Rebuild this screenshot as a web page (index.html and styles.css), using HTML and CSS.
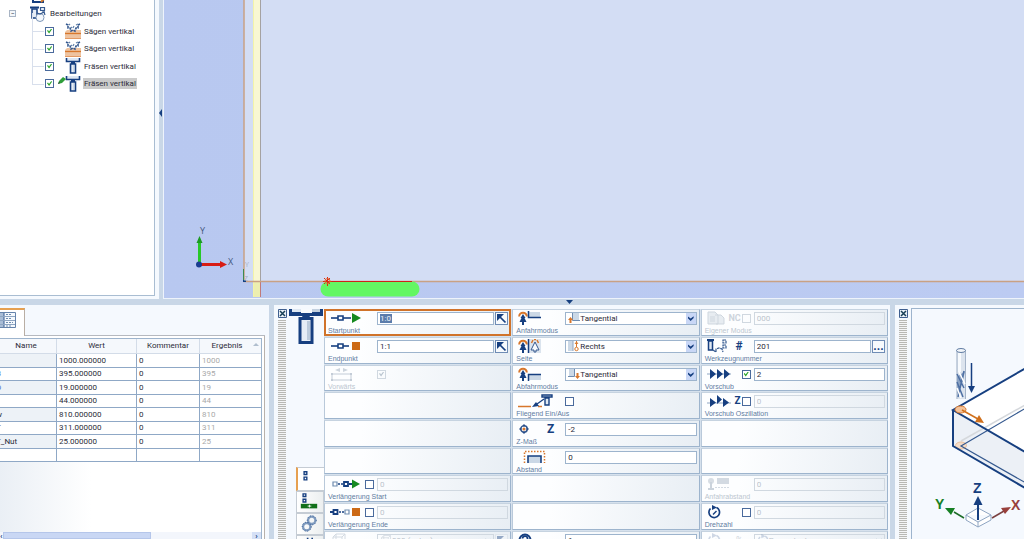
FILE: index.html
```html
<!DOCTYPE html>
<html lang="de">
<head>
<meta charset="utf-8">
<title>Bearbeitungen</title>
<link rel="stylesheet" href="styles.css">
</head>
<body>
<svg class="defs" width="0" height="0" aria-hidden="true">
  <defs>
    <symbol id="saw" viewBox="0 0 16 16">
      <path d="M0 9l2-2h14v9H0z" fill="#eec3a0"/><path d="M0 10.500h16" stroke="#d8772c" stroke-width="1.300"/><path d="M0 15.500h16" stroke="#e39a64"/>
      <path d="M1 1l2 1v3l2 0 1 3 2-1 2 1 1-3 2 0 0-3 2-1" fill="none" stroke="#35598f" stroke-width="1.600" stroke-dasharray="2.500 .8"/>
      <path d="M5 2L4 1M8 5l1-2M11 2l2-1M6 4l1 1" stroke="#6583ab" stroke-width="1.200"/>
    </symbol>
    <symbol id="mill" viewBox="0 0 16 16">
      <path d="M1.500 0v3.500h13V0" fill="#dce6f2" stroke="#163f80" stroke-width="1.600"/><path d="M6 4h4v2H6z" fill="#163f80"/>
      <path d="M5.500 6h5v9h-5z" fill="#e6edf6" stroke="#163f80" stroke-width="1.600"/><path d="M9 7v7" stroke="#b4c4d8"/>
    </symbol>
    <symbol id="tools" viewBox="0 0 16 16">
      <path d="M0 1.500h9" stroke="#163f80" stroke-width="2"/><path d="M2 3h5v9H2z" fill="#e6edf6" stroke="#163f80" stroke-width="1.500"/>
      <path d="M10.500 1.500h4v3h-4zM12 6h3" fill="#e6edf6" stroke="#35598f" stroke-width="1.200"/><circle cx="10" cy="11.500" r="4" fill="#f4f8fd" stroke="#7f97b8"/><path d="M7 7l3 1 4-2 1 3" stroke="#35598f" fill="none" stroke-width="1.200"/>
    </symbol>
    <symbol id="close" viewBox="0 0 9 9">
      <path d="M.5.5h8v8h-8z" fill="#eaf1f8" stroke="#3f5f8f"/><path d="M2 2l5 5M7 2L2 7" stroke="#173f57" stroke-width="1.500"/>
    </symbol>
    <symbol id="start" viewBox="0 0 32 12">
      <path d="M1 6h20" stroke="#163f80" stroke-width="1.600"/><path d="M8 4h5v4H8z" fill="#fff" stroke="#163f80" stroke-width="1.600"/><path d="M22 1l9 5-9 5z" fill="#168a20"/>
    </symbol>
    <symbol id="end" viewBox="0 0 32 12">
      <path d="M1 6h18" stroke="#163f80" stroke-width="1.600"/><path d="M8 4h5v4H8z" fill="#fff" stroke="#163f80" stroke-width="1.600"/><path d="M22 2h8v8h-8z" fill="#cc6a16"/>
    </symbol>
    <symbol id="extstart" viewBox="0 0 32 12">
      <path d="M3 4h4v4H3z" fill="#fff" stroke="#6f8cb0" stroke-width="1.200"/><path d="M8 6h6" stroke="#163f80" stroke-width="1.400" stroke-dasharray="2 1"/><path d="M14 4h4v4h-4zM19 6h4" fill="#fff" stroke="#163f80" stroke-width="1.800"/><path d="M22 1.500l8 4.500-8 4.500z" fill="#168a20"/>
    </symbol>
    <symbol id="extend" viewBox="0 0 32 12">
      <path d="M0 6h3M3.500 4h4v4h-4z" fill="#fff" stroke="#163f80" stroke-width="1.800"/><path d="M9 6h6" stroke="#163f80" stroke-width="1.400" stroke-dasharray="2 1"/><path d="M15 4h4v4h-4z" fill="#fff" stroke="#6f8cb0" stroke-width="1.200"/><path d="M22 2h8v8h-8z" fill="#cc6a16"/>
    </symbol>
    <symbol id="forward" viewBox="0 0 32 14">
      <path d="M5 3l5-2v4zM13 1l5 2-5 2z" fill="#ccd4dd"/><path d="M2 7h19v6H2z" fill="none" stroke="#c3ccd7"/><path d="M1 6h2v2H1zM20 6h2v2h-2zM1 12h2v2H1zM20 12h2v2h-2z" fill="#c3ccd7"/>
    </symbol>
    <symbol id="tree" viewBox="0 0 10 14">
      <path d="M1.200 5.500a3.800 3.800 0 1 1 7.600 0" fill="none" stroke="#d8772c" stroke-width="2"/><path d="M5 3l2.500 4H6.500l2 4H6v3H4v-3H1.500l2-4h-1z" fill="#163f80"/>
    </symbol>
    <symbol id="approach" viewBox="0 0 32 14">
      <use href="#tree" width="10" height="14"/><path d="M11 1v6h11V1z" fill="#cbd8e6"/><path d="M10.500 0v6.500H23" fill="none" stroke="#163f80" stroke-width="1.500"/>
    </symbol>
    <symbol id="side" viewBox="0 0 32 14">
      <use href="#tree" width="10" height="14"/><path d="M11 0h12v14H11z" fill="#dbe4ee"/><path d="M10.500 0v14" stroke="#163f80" stroke-width="1.500"/><path d="M17 3l4 8h-3v2h-2v-2h-3z" fill="#f7fafd" stroke="#35598f"/><path d="M13.500 4l1.500-3M20.500 4L19 1M16 .5h2" stroke="#d8772c" stroke-width="1.500" fill="none"/>
    </symbol>
    <symbol id="leave" viewBox="0 0 32 14">
      <use href="#tree" width="10" height="14"/><path d="M11 8h12v5H11z" fill="#cbd8e6"/><path d="M10.500 14V7.500H23" fill="none" stroke="#163f80" stroke-width="1.500"/>
    </symbol>
    <symbol id="flying" viewBox="0 0 36 14">
      <path d="M0 12.500h13M20 12.500h4" stroke="#d8772c" stroke-width="1.500"/><path d="M26 5l-7 5" stroke="#163f80" stroke-width="1.300"/><path d="M14 13l4-5 3 4z" fill="#163f80"/><path d="M24 1h10v2H24zM27 4h4v7h-4z" fill="#e0e9f3" stroke="#163f80" stroke-width="1.400"/>
    </symbol>
    <symbol id="target" viewBox="0 0 10 10">
      <circle cx="5" cy="5" r="2.700" fill="#fff" stroke="#35598f" stroke-width="1.300"/><path d="M5 1v2M5 7v2M1 5h2M7 5h2" stroke="#163f80"/><circle cx="5" cy="5" r="1.300" fill="#d8772c"/>
    </symbol>
    <symbol id="distance" viewBox="0 0 32 14">
      <path d="M6.500 13V1.500h20V13" fill="none" stroke="#d8772c" stroke-width="1.500" stroke-dasharray="1.500 1.500"/><path d="M10 13V6h13v7" fill="#cbd8e6" stroke="#163f80" stroke-width="1.600"/>
    </symbol>
    <symbol id="toolnum" viewBox="0 0 20 14">
      <path d="M0 1h7" stroke="#163f80" stroke-width="2"/><path d="M1.500 2h4v9h-4z" fill="#e0e9f3" stroke="#163f80" stroke-width="1.500"/><path d="M6 11l3 2 0-3 3-1 3 1 1 3M16 1h3v3h-3zM16 6h3v3h-3z" fill="none" stroke="#35598f" stroke-width="1.200" stroke-dasharray="3 .7"/>
    </symbol>
    <symbol id="feed" viewBox="0 0 24 12">
      <path d="M0 6h24" stroke="#8ea5c2"/><path d="M3 1l6 5-6 5zM10 1l6 5-6 5zM17 1l6 5-6 5z" fill="#163f80"/>
    </symbol>
    <symbol id="feedz" viewBox="0 0 24 12">
      <path d="M0 8h24" stroke="#8ea5c2"/><path d="M3 3l6 4.500-6 4.500zM10 0l5 4.500-5 4.500zM16 3l6 4.500-6 4.500z" fill="#163f80"/>
    </symbol>
    <symbol id="speed" viewBox="0 0 14 14">
      <path d="M3.500 3.500a5.300 5.300 0 1 0 6-1" fill="none" stroke="#163f80" stroke-width="1.700"/><path d="M5 0l5 2.500-5 2.500z" fill="#163f80"/><path d="M9.500 6L6 9.500" stroke="#163f80" stroke-width="1.500"/>
    </symbol>
    <symbol id="page" viewBox="0 0 18 14">
      <path d="M1 1h7l3 3v9H1zM8 4h6l3 3v6H9" fill="#e7ecf1" stroke="#cfd7df"/><path d="M3 6h5M3 8h5M3 10h5" stroke="#cfd7df"/>
    </symbol>
    <symbol id="gap" viewBox="0 0 24 14">
      <circle cx="4" cy="4" r="3" fill="#d7dde4"/><path d="M4 5v7M1 12h6" stroke="#cbd3dc" stroke-width="2"/><path d="M10 1h12v6H10z" fill="#d3dae2"/><path d="M8 10.500h15" stroke="#d3dae2" stroke-dasharray="2 1"/>
    </symbol>
    <symbol id="cube" viewBox="0 0 16 14">
      <path d="M2 4h9v10H2zM2 4l3-3h9v10l-3 3M11 4l3-3M5 1v10" fill="none" stroke="#d3dae2"/>
    </symbol>
    <symbol id="info" viewBox="0 0 14 14">
      <circle cx="7" cy="7" r="5.500" fill="#fff" stroke="#163f80" stroke-width="2"/><path d="M4.500 5.500a2.500 2.500 0 1 1 3 2.500V10" fill="none" stroke="#163f80" stroke-width="1.800"/>
    </symbol>
    <symbol id="pick" viewBox="0 0 11 11">
      <path d="M3 3l6.500 6.500" stroke="#163f80" stroke-width="1.700"/><path d="M1 1h7L1 8z" fill="#163f80"/>
    </symbol>
    <symbol id="tan1" viewBox="0 0 12 12"><path d="M5 1h6v7H5z" fill="#cbd8e6"/><path d="M4.500 1v7.500H12" stroke="#6f8cb0" fill="none"/><path d="M2.500 5L5 8H3.500v3h-2V8H0z" fill="#d8772c"/></symbol>
    <symbol id="right1" viewBox="0 0 12 12"><path d="M0 1h5v10H0z" fill="#cbd8e6"/><path d="M5 1v10" stroke="#8ea5c2"/><circle cx="8.500" cy="9" r="1.700" fill="none" stroke="#d8772c"/><path d="M8.500 7V1M7 4l1.500-2L10 4" stroke="#d8772c" fill="none"/></symbol>
    <symbol id="tan2" viewBox="0 0 12 12"><path d="M1 1h5v7H1z" fill="#cbd8e6"/><path d="M0 8.500h6.500V1" stroke="#6f8cb0" fill="none"/><path d="M9.500 11L7 8h1.500V5h2v3H12z" fill="#d8772c"/></symbol>
  </defs>
</svg>

<div class="app">
  <div class="upper">
    <nav class="tree-panel">
      <ul class="tree">
        <li class="root"><span class="expander none"></span><svg class="node-icon" viewBox="0 0 16 16"><path d="M3 6h10v8H3z" fill="#fff" stroke="#163f80" stroke-width="2"/><path d="M5 11h6" stroke="#35598f"/><path d="M11 14l3-3" stroke="#d27a2c" stroke-width="2"/></svg><span>Bauteilplan</span></li>
        <li class="root"><button class="expander" type="button" aria-label="Zuklappen">−</button><svg class="node-icon"><use href="#tools"/></svg><span>Bearbeitungen</span></li>
        <li class="leaf"><input type="checkbox" class="box" id="t1" checked><svg class="node-icon"><use href="#saw"/></svg><label for="t1">Sägen vertikal</label></li>
        <li class="leaf"><input type="checkbox" class="box" id="t2" checked><svg class="node-icon"><use href="#saw"/></svg><label for="t2">Sägen vertikal</label></li>
        <li class="leaf"><input type="checkbox" class="box" id="t3" checked><svg class="node-icon"><use href="#mill"/></svg><label for="t3">Fräsen vertikal</label></li>
        <li class="leaf selected"><input type="checkbox" class="box" id="t4" checked><svg class="node-icon"><use href="#mill"/></svg><label for="t4">Fräsen vertikal</label><svg class="pencil" viewBox="0 0 8 8"><path d="M0 8l1-3 4-4 3 2-4 4z" fill="#2f9e3a"/><path d="M0 8l1-2 1 1z" fill="#333"/></svg></li>
      </ul>
    </nav>
    <div class="splitter-v"><i class="arrow-left"></i></div>
    <main class="view">
      <svg class="scene" viewBox="164 0 860 298" preserveAspectRatio="xMinYMax slice">
        <path d="M244 0h780v281H244z" fill="#d3ddf4"/>
        <path d="M253 0h7v297h-7z" fill="#f8f7d2"/><path d="M253 282h7v15h-7z" fill="#eceeb0"/>
        <path d="M253.500 0v297" stroke="#f3f3a8"/><path d="M260.500 0v297" stroke="#a5a2a2"/><path d="M260.500 282v15" stroke="#c07a7a"/>
        <path d="M244 0v281.500h780" fill="none" stroke="#c9a184" stroke-width="1.500"/>
        <path d="M243.500 269v12" stroke="#3c8a50"/><path d="M243 280h3v2h-3z" fill="#163f80"/>
        <rect x="320.500" y="281.500" width="99" height="15" rx="7.500" fill="#63f763"/>
        <path d="M328 281.500h84" stroke="#cf2318" stroke-width="1.200"/>
        <path d="M327.500 277v9M323 281.500h9M324 278l6 6M330 278l-6 6" stroke="#dc2a14" stroke-width="1"/><circle cx="327.500" cy="281" r="2.500" fill="none" stroke="#e06a30"/>
        <path d="M199.500 264v-22" stroke="#28c828" stroke-width="3"/><path d="M196.500 243l3-7 3 7z" fill="#1c9a24"/>
        <path d="M199 264.500h22" stroke="#d81c14" stroke-width="3"/><path d="M220 261l7 3.500-7 3.500z" fill="#d81c14"/>
        <circle cx="199" cy="264.500" r="3" fill="#1a3c90"/>
        <text class="axis" x="200" y="234">Y</text><text class="axis" x="228" y="265">X</text>
        <text class="axis faint" x="245" y="267">Y</text><text class="axis faint" x="244" y="281">Z</text>
      </svg>
    </main>
  </div>
  <div class="splitter-h"><i class="arrow-down"></i></div>
  <div class="lower">
    <section class="vars">
      <div class="tabs"><button class="tab" type="button" aria-label="Variablen"><svg viewBox="0 0 16 16"><path d="M0 .5h15.500v15H0z" fill="#f5f9fd" stroke="#6583ab"/><path d="M0 1h4v14H0z" fill="#a9bdd6"/><path d="M4 1v14" stroke="#35598f"/><path d="M0 4.500h15M0 8.500h15M0 12.500h15" stroke="#8ea5c2"/><path d="M6 2.500h6M6 6.500h6M6 10.500h7M6 14h5" stroke="#6f8cb0" stroke-dasharray="2 1"/></svg></button><span></span></div>
      <div class="vars-body">
        <div class="grid-box">
          <table>
            <colgroup><col class="c-name"><col class="c-wert"><col class="c-kom"><col class="c-erg"></colgroup>
            <thead><tr><th>Name</th><th>Wert</th><th>Kommentar</th><th>Ergebnis<i class="sort"></i></th></tr></thead>
            <tbody>
              <tr><td></td><td>1000.000000</td><td>0</td><td>1000</td></tr>
              <tr><td class="sys">B</td><td>395.000000</td><td>0</td><td>395</td></tr>
              <tr><td class="sys">D</td><td>19.000000</td><td>0</td><td>19</td></tr>
              <tr><td></td><td>44.000000</td><td>0</td><td>44</td></tr>
              <tr><td>w</td><td>810.000000</td><td>0</td><td>810</td></tr>
              <tr><td>T</td><td>311.000000</td><td>0</td><td>311</td></tr>
              <tr><td>T_Nut</td><td>25.000000</td><td>0</td><td>25</td></tr>
              <tr><td></td><td></td><td></td><td></td></tr>
            </tbody>
          </table>
          <div class="scroll"><span>‹</span><i></i><span>›</span></div>
        </div>
      </div>
    </section>

    <section class="editor">
      <div class="grip"><svg><use href="#close"/></svg><i></i></div>
      <aside class="side">
        <svg class="big" viewBox="0 0 34 35"><path d="M0 0h34v7H21l-1 2h-6l-1-2H0z" fill="#163f80"/><path d="M3 0h9v3H3z" fill="#dde7f2"/><path d="M12 0h11v4H12z" fill="#f7fafd"/><path d="M23 0h8v3h-8z" fill="#c2d0df"/><path d="M11 9.500h12v24H11z" fill="#e6edf6" stroke="#163f80" stroke-width="3"/><path d="M19.500 12v19" stroke="#bccbdc" stroke-width="3"/></svg>
        <div class="pages">
          <button type="button" class="on" aria-label="Seite 1"><svg viewBox="0 0 24 22"><path d="M5.500 3h3v3h-3zM5.500 9h3v3h-3z" fill="#fff" stroke="#163f80" stroke-width="1.500"/></svg></button>
          <button type="button" aria-label="Seite 2"><svg viewBox="0 0 24 22"><path d="M5.500 2h3v3h-3zM5.500 8h3v3h-3z" fill="#fff" stroke="#163f80" stroke-width="1.500"/><path d="M3 13h18v5H3z" fill="#12701a"/><path d="M10.500 15.500h4M12.500 14v3" stroke="#fff"/></svg></button>
          <button type="button" aria-label="Seite 3"><svg viewBox="0 0 24 22"><g fill="none" stroke="#7f9bbf" stroke-width="2.500"><circle cx="15" cy="7" r="4"/><circle cx="9.500" cy="14" r="4"/></g><g fill="none" stroke="#35598f" stroke-dasharray="1 2"><circle cx="15" cy="7" r="5"/><circle cx="9.500" cy="14" r="5"/></g></svg></button>
          <button type="button" aria-label="Seite 4"><svg viewBox="0 0 24 22"><path d="M10.500 2v6M15.500 2v6M11 5h4" stroke="#163f80" stroke-width="1.800"/></svg></button>
        </div>
      </aside>
      <form class="fields">
        <div class="field active"><span class="lead"><svg><use href="#start"/></svg></span><span class="ctl"><input id="f1" type="text" value="1:0" class="picked"><button type="button" class="pick" aria-label="Punkt wählen"><svg><use href="#pick"/></svg></button></span><label for="f1">Startpunkt</label></div>
        <div class="field"><span class="lead"><svg><use href="#approach"/></svg></span><span class="ctl combo"><svg><use href="#tan1"/></svg><select id="f2"><option>Tangential</option></select></span><label for="f2">Anfahrmodus</label></div>
        <div class="field off"><span class="lead"><svg class="w18"><use href="#page"/></svg><b>NC</b><input type="checkbox" class="box" aria-label="NC" disabled></span><span class="ctl"><input id="f3" type="text" value="000" disabled></span><label for="f3">Eigener Modus</label></div>

        <div class="field"><span class="lead"><svg><use href="#end"/></svg></span><span class="ctl"><input id="f4" type="text" value="1:1"><button type="button" class="pick" aria-label="Punkt wählen"><svg><use href="#pick"/></svg></button></span><label for="f4">Endpunkt</label></div>
        <div class="field"><span class="lead"><svg><use href="#side"/></svg></span><span class="ctl combo"><svg><use href="#right1"/></svg><select id="f5"><option>Rechts</option></select></span><label for="f5">Seite</label></div>
        <div class="field"><span class="lead"><svg class="w20"><use href="#toolnum"/></svg><b class="hash">#</b></span><span class="ctl"><input id="f6" type="text" value="201"><button type="button" class="pick dots">...</button></span><label for="f6">Werkzeugnummer</label></div>

        <div class="field off"><span class="lead"><svg><use href="#forward"/></svg></span><span class="ctl"><input id="f7" type="checkbox" class="box" checked disabled></span><label for="f7">Vorwärts</label></div>
        <div class="field"><span class="lead"><svg><use href="#leave"/></svg></span><span class="ctl combo"><svg><use href="#tan2"/></svg><select id="f8"><option>Tangential</option></select></span><label for="f8">Abfahrmodus</label></div>
        <div class="field"><span class="lead"><svg class="w24"><use href="#feed"/></svg><input type="checkbox" class="box" aria-label="Vorschub aktiv" checked></span><span class="ctl"><input id="f9" type="text" value="2"></span><label for="f9">Vorschub</label></div>

        <div class="field"></div>
        <div class="field"><span class="lead"><svg class="w36"><use href="#flying"/></svg></span><span class="ctl"><input id="f10" type="checkbox" class="box"></span><label for="f10">Fliegend Ein/Aus</label></div>
        <div class="field"><span class="lead"><svg class="w24"><use href="#feedz"/></svg><b>Z</b><input type="checkbox" class="box" aria-label="Oszillation aktiv"></span><span class="ctl"><input id="f11" type="text" value="0" disabled></span><label for="f11">Vorschub Oszillation</label></div>

        <div class="field"></div>
        <div class="field"><span class="lead"><svg class="w12"><use href="#target"/></svg><b class="hash">Z</b></span><span class="ctl"><input id="f12" type="text" value="-2"></span><label for="f12">Z-Maß</label></div>
        <div class="field"></div>

        <div class="field"></div>
        <div class="field"><span class="lead"><svg><use href="#distance"/></svg></span><span class="ctl"><input id="f13" type="text" value="0"></span><label for="f13">Abstand</label></div>
        <div class="field"></div>

        <div class="field"><span class="lead"><svg><use href="#extstart"/></svg><input type="checkbox" class="box" aria-label="Verlängerung Start aktiv"></span><span class="ctl"><input id="f14" type="text" value="0" disabled></span><label for="f14">Verlängerung Start</label></div>
        <div class="field"></div>
        <div class="field off"><span class="lead"><svg class="w24"><use href="#gap"/></svg></span><span class="ctl"><input id="f15" type="text" value="0" disabled></span><label for="f15">Anfahrabstand</label></div>

        <div class="field"><span class="lead"><svg><use href="#extend"/></svg><input type="checkbox" class="box" aria-label="Verlängerung Ende aktiv"></span><span class="ctl"><input id="f16" type="text" value="0" disabled></span><label for="f16">Verlängerung Ende</label></div>
        <div class="field"></div>
        <div class="field"><span class="lead"><svg class="w14"><use href="#speed"/></svg><input type="checkbox" class="box" aria-label="Drehzahl aktiv"></span><span class="ctl"><input id="f17" type="text" value="0" disabled></span><label for="f17">Drehzahl</label></div>

        <div class="field off"><span class="lead"><svg class="w18"><use href="#cube"/></svg></span><span class="ctl combo paired"><svg><use href="#cube"/></svg><select aria-label="Ebene" disabled><option>000 (unten)</option></select><button type="button" class="pick" aria-label="Ebene wählen" disabled><svg><use href="#pick"/></svg></button></span></div>
        <div class="field"><span class="lead"><svg class="w14"><use href="#info"/></svg></span><span class="ctl"><input type="text" aria-label="Anzahl" value="1"></span></div>
        <div class="field off"><span class="lead"><svg class="w14 pale"><use href="#speed"/></svg><b class="hash thin">%</b></span><span class="ctl combo"><svg class="pale"><use href="#speed"/></svg><select aria-label="Einheit" disabled><option>Prozentual</option></select></span></div>
      </form>
    </section>

    <section class="help">
      <div class="grip"><svg><use href="#close"/></svg><i></i></div>
      <div class="canvas">
        <svg viewBox="912 309 113 230" width="113" height="230">
          <path d="M953 410l72-41.500v84z" fill="#fff"/><path d="M953 411l72 41.500v36l-72-42z" fill="#ecf0f6"/>
          <path d="M961 441l64-36" stroke="#d5d8dc" stroke-width="1.500"/>
          <ellipse cx="961" cy="445.500" rx="5.500" ry="3.500" fill="#f5dcc8" stroke="#e8c0a0"/>
          <path d="M1025 408.500l-64 37.500 64 36.500" fill="none" stroke="#35598f" stroke-width="1.200"/>
          <path d="M1025 368.500l-72 41.500 72 42M953 410v36l72 42" fill="none" stroke="#163f80" stroke-width="2"/>
          <path d="M956.500 350v49h9v-49" fill="#dce4ee"/><path d="M958 350h3v22h-3z" fill="#f7fafd"/><path d="M957 350v49M965.500 350v49" stroke="#a3b3c8"/><ellipse cx="961" cy="350.500" rx="4.500" ry="2" fill="#f2f6fa" stroke="#5f7ba2"/>
          <path d="M957 377l8-6-2 10-6 14z" fill="#8da4c4"/><path d="M957 374l7 14M957 382l6 15M964 371l-6 26" stroke="#4e70a4" stroke-width="1.500"/><path d="M959 372l6 12M957 388l4 10" stroke="#fff" stroke-width="1.500"/>
          <path d="M971.500 363v25" stroke="#163f80" stroke-width="1.500"/><path d="M968 386h7l-3.500 7z" fill="#163f80"/>
          <ellipse cx="960.500" cy="409.500" rx="5.500" ry="3.500" fill="#f3c39b" stroke="#d8772c"/><path d="M962 410l16 9" stroke="#d0701c" stroke-width="1.500"/><path d="M984 423l-9-1 4-7z" fill="#d0701c"/>
          <path d="M966 515v5l12 7 13-7v-5l-13 7zM978 522v5M966 515l12-7 13 7" fill="#fff" stroke="#8ea5c2"/>
          <path d="M978 520v-15" stroke="#163f80" stroke-width="2"/><path d="M973.500 505l4.500-9 4.500 9z" fill="#163f80"/>
          <path d="M964 518l-10-6" stroke="#1c6c28" stroke-width="1.500"/><path d="M945 508l10 0-4 7z" fill="#168024"/>
          <path d="M992 518l12-7" stroke="#7a4040" stroke-width="1.500"/><path d="M1011 507l-10 1 4 6z" fill="#98403c"/>
          <text class="dim z" x="973" y="493">Z</text><text class="dim y" x="935" y="509">Y</text><text class="dim x" x="1011" y="510">X</text>
        </svg>
      </div>
    </section>
  </div>
</div>
</body>
</html>
```
FILE: styles.css
```css
* { box-sizing: border-box; }
:root {
  --frame: #c9d7e7;
  --panel: #f5f9fe;
  --line: #9db4cd;
  --navy: #163f80;
}
body { margin: 0; font: 8px/12px Roboto, "Open Sans", sans-serif; color: #2b2b38; background: var(--frame); }
input, select, button { font: inherit; color: inherit; margin: 0; border-radius: 0; }
.defs { position: absolute; }
.app { display: grid; grid-template-rows: 1fr 6px 234px; height: 100vh; overflow: hidden; }
.upper { display: grid; grid-template-columns: 159px 4px 1fr; min-height: 0; }

.tree-panel { background: #fff; border: solid var(--panel); border-width: 0 4px 3px 0; box-shadow: inset -1px -1px #a9bdd2; overflow: hidden; }
.tree { list-style: none; margin: -13px 0 0; padding: 0; display: grid; grid-auto-rows: 18px 17px; }
.tree li { display: flex; align-items: center; position: relative; }
.root { padding-left: 9px; }
.expander { width: 7px; height: 7px; padding: 0; margin-right: 14px; border: 1px solid #a8b4c4; background: #f4f7fa; font-size: 7px; line-height: 4px; color: #345; }
.expander.none { visibility: hidden; }
.node-icon { width: 16px; height: 16px; flex: none; }
.root .node-icon { margin-right: 4px; }
.leaf { padding-left: 45px; }
.leaf::before { content: ""; position: absolute; left: 32px; top: -9px; width: 11px; height: 18px; border: solid #d8dfec; border-width: 0 0 1px 1px; }
.leaf .node-icon { margin: 0 2px 0 11px; }
.leaf label { padding: 0 1px; line-height: 11px; }
.selected label { background: #cbcbcb; }
.pencil { position: absolute; left: 58px; top: 1px; width: 8px; height: 8px; }

.box { appearance: none; flex: none; width: 9px; height: 9px; border: 1px solid #4a6a9c; background: #fff; display: grid; place-items: center; }
.box:checked::after { content: ""; width: 5px; height: 5px; background: #28a428; clip-path: polygon(0 45%, 20% 30%, 40% 60%, 85% 0, 100% 15%, 42% 100%); }
.box:disabled { border-color: #d0d8e0; background: transparent; }
.box:disabled:checked::after { background: #b9c4cf; }

.splitter-v { display: flex; }
.arrow-left { margin-top: 109px; width: 3px; height: 8px; background: var(--navy); clip-path: polygon(0 50%, 100% 0, 100% 100%); }
.view { background: linear-gradient(90deg, #b8c8f0, #bccbf2); border: solid #eef3fb; border-width: 0 0 1px 1px; overflow: hidden; }
.scene { display: block; width: 100%; height: 100%; }
.axis { font: 9px "Open Sans", sans-serif; fill: #45587e; }
.faint { font-size: 7px; fill: #a6adbd; }
.splitter-h { display: flex; justify-content: center; padding-left: 115px; }
.arrow-down { margin-top: 1px; width: 7px; height: 4px; background: var(--navy); clip-path: polygon(0 0, 100% 0, 50% 100%); }

.lower { display: grid; grid-template-columns: 269px minmax(0, 1fr) 129px; gap: 5px; min-height: 0; }
.vars, .editor, .help { background: var(--panel); min-height: 0; overflow: hidden; }
.vars { display: flex; flex-direction: column; padding-top: 3px; }
.tabs { display: flex; height: 28px; padding-right: 4px; flex: none; }
.tab { width: 25px; padding: 2px 8px 0 0; border: solid #b9aea4; border-width: 2px 1px 0 0; border-top-color: #e6a050; background: #fff; display: flex; align-items: start; }
.tab svg { display: block; width: 16px; height: 16px; }
.tabs span { flex: 1; border-bottom: 1px solid #b5b9c0; }
.vars-body { flex: 1; min-height: 0; margin-right: 4px; padding: 2px 2px 0 0; border-right: 1px solid #b9b2ac; background: #fff; }
.grid-box { height: 100%; display: flex; flex-direction: column; border: solid var(--line); border-width: 1px 1px 0 0; background: linear-gradient(90deg, #eaeff5, #fff 35%); overflow: hidden; }
table { width: 267px; margin-left: -4px; flex: none; table-layout: fixed; border-collapse: separate; border-spacing: 0; }
.c-name { width: 61px; } .c-wert { width: 80px; } .c-kom { width: 63px; }
th, td { padding: 0 2px; font-weight: 400; line-height: 12px; white-space: nowrap; overflow: hidden; border: solid #8fa8c6; border-width: 0 1px 1px 0; }
th { line-height: 14px; background: #f5f8fc; border-color: #d3dce8; text-align: center; }
th:last-child { padding-right: 10px; position: relative; }
.sort { position: absolute; right: 3px; top: 4px; width: 6px; height: 3px; background: #b0bece; clip-path: polygon(50% 0, 100% 100%, 0 100%); }
tbody tr { height: 14px; background: #fff; }
tbody tr:nth-child(even) { height: 13px; }
tbody tr:nth-child(odd) td:first-child { background: #edf2f7; }
td:first-child { padding-left: 0; }
td:last-child { color: #a9a9a9; }
td.sys { color: #5578d0; }
.scroll { margin-top: auto; height: 7px; display: flex; background: #f3f6fc; color: var(--navy); font-weight: 700; line-height: 8px; }
.scroll i { width: 148px; margin-right: auto; background: #c9d7f4; border: 1px solid #b5c6ea; }
.scroll span:last-child { width: 9px; background: #d5e0f6; text-align: center; }

.editor { display: grid; grid-template-columns: 10px 36px 1fr; padding: 4px 2px 0 4px; }
.grip { display: flex; flex-direction: column; gap: 2px; }
.grip svg { width: 9px; height: 9px; flex: none; }
.grip i { flex: 1; width: 8px; background: repeating-linear-gradient(#b8b8b4 0 1px, #f4f5f6 1px 2px); }
.side { display: flex; flex-direction: column; gap: 123px; padding-left: 1px; min-width: 0; }
.big { width: 34px; height: 35px; flex: none; }
.pages { margin-left: 7px; }
.pages button { display: block; width: 28px; height: 22px; padding: 0; border: 1px solid #c5ccd4; background: linear-gradient(90deg, #fff, #eceff0); }
.pages .on { height: 24px; border-left: 2px solid #e6a050; border-right: 0; background: #fff; }
.pages svg { display: block; width: 24px; height: 20px; }

.fields { display: grid; grid-template-columns: repeat(3, minmax(0, 1fr)); grid-auto-rows: 28px 28px 27px; column-gap: 1px; margin: 0; background: #d6e1ed; }
.field { display: grid; grid-template-columns: 49px minmax(0, 1fr); grid-template-rows: 15px 10px; padding: 1px 2px 0 3px; margin-bottom: 1px; border: solid var(--line); border-width: 1px; border-left-color: #b9c9da; border-top-color: #c6d3e0; background: linear-gradient(100deg, #fdfeff 20%, #e8eef4); overflow: hidden; }
.field.active { border: 2px solid #d0732a; padding: 0 1px 0 2px; }
.lead { display: flex; align-items: center; height: 14px; min-width: 0; }
.lead svg { width: 32px; height: 14px; flex: none; margin-left: 2px; }
.lead .w12 { width: 12px; } .lead .w14 { width: 14px; } .lead .w18 { width: 18px; } .lead .w20 { width: 20px; } .lead .w24 { width: 24px; } .lead .w36 { width: 36px; }
.lead .box { margin: 0 3px 0 auto; }
.lead b { margin-left: auto; margin-right: 1px; font-size: 10px; line-height: 12px; color: var(--navy); }
.lead b + .box { margin-left: 0; }
.lead .hash { margin-right: 11px; font-size: 12px; }
.lead .thin { font-weight: 400; }
.off .lead b { color: #cdd4dc; font-size: 9px; }
.pale { opacity: .2; }
.ctl { display: flex; align-items: center; gap: 1px; height: 14px; position: relative; min-width: 0; }
.ctl input[type="text"], .ctl select { flex: 1; min-width: 0; width: 100%; height: 13px; padding: 0 2px; line-height: 11px; border: 1px solid var(--line); background: #fff; outline: 0; }
.ctl input:disabled, .ctl select:disabled { color: #bcc4cc; border-color: #d0d8e0; background: transparent; opacity: 1; }
.ctl input.picked { background: linear-gradient(#5b7cab, #5b7cab) 2px 1px / 12px 9px no-repeat #fff; color: #eef3f9; }
.pick { width: 13px; height: 13px; padding: 0; border: 1px solid #6f8cb5; background: #f7fafd; }
.pick svg { display: block; width: 11px; height: 11px; }
.pick:disabled { border-color: #d0d8e0; opacity: .4; }
.dots { font-weight: 700; font-size: 12px; line-height: 7px; color: var(--navy); }
.combo > svg { position: absolute; left: 3px; top: 1px; width: 12px; height: 12px; }
.ctl select { appearance: none; padding-left: 14px; background: linear-gradient(#c9d7f6, #c9d7f6) right / 10px 100% no-repeat #fff; }
.combo::after { content: ""; position: absolute; right: 3px; top: 4px; width: 6px; height: 6px; background: var(--navy); clip-path: polygon(0 20%, 50% 60%, 100% 20%, 100% 50%, 50% 100%, 0 50%); }
.combo.paired::after { right: 17px; }
.off .combo::after { background: #c3ccd7; }
.field label { grid-column: 1 / -1; font: 7px/10px "Liberation Sans", sans-serif; color: #5f7c9f; white-space: nowrap; }
.field.off label { color: #bcc6d0; }

.help { display: grid; grid-template-columns: 9px 1fr; gap: 3px; padding: 3px 0 0 4px; }
.help .grip { padding-top: 1px; }
.canvas { border: solid var(--line); border-width: 1px 0 0 1px; overflow: hidden; }
.canvas svg { display: block; }
.dim { font: 700 14px "Liberation Sans", sans-serif; }
.z { fill: #163f80; } .y { fill: #168024; } .x { fill: #98403c; }
```
